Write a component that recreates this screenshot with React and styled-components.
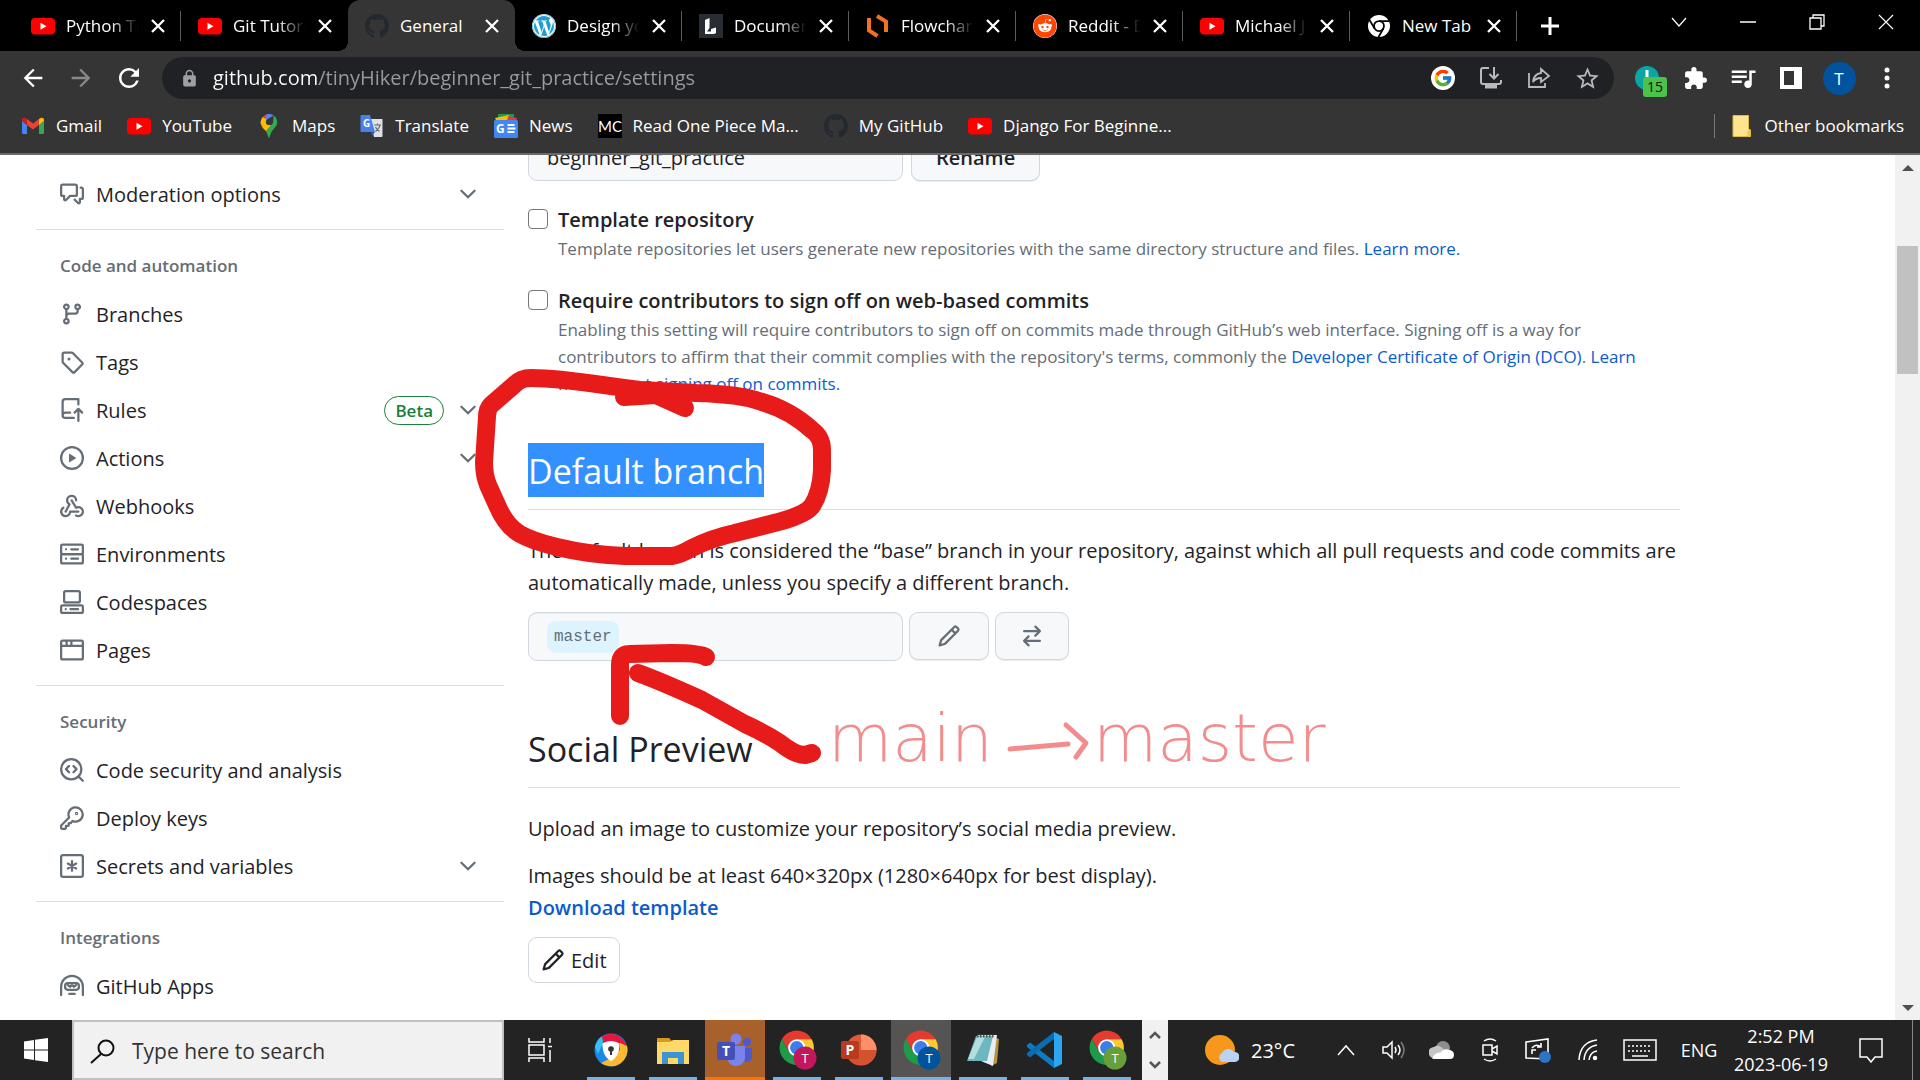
import React from "react";
import styled, { createGlobalStyle, css } from "styled-components";
import { FaWordpress, FaReddit } from "react-icons/fa";
import { FcGoogle } from "react-icons/fc";
import { MdExtension, MdQueueMusic, MdStarBorder, MdRefresh, MdArrowBack, MdArrowForward, MdLock } from "react-icons/md";

const ui = '"Open Sans", "Noto Sans", sans-serif';
const mono = '"Liberation Mono", monospace';
const c = {
  ink: "#1f2328",
  muted: "#656d76",
  link: "#0c5bce",
  line: "#d8dee4",
  field: "#f6f8fa",
  chrome: "#353535",
  pen: "#e81b1b",
};

const Global = createGlobalStyle`
  *, *::before, *::after { box-sizing: border-box; }
  body { margin: 0; font-family: ${ui}; color: ${c.ink}; background: #fff; }
  button, input { font: inherit; color: inherit; }
  button { background: none; border: 0; padding: 0; cursor: pointer; }
  h2, h3, p, ul { margin: 0; padding: 0; font-weight: 400; }
  ul { list-style: none; }
  a { text-decoration: none; color: inherit; }
  svg { display: block; flex: none; }
`;

const Screen = styled.div`
  height: 100vh;
  display: flex;
  flex-direction: column;
  overflow: hidden;
`;

/* ---------- tab strip ---------- */

const TabStrip = styled.header`
  flex: none;
  display: flex;
  height: 51px;
  padding-left: 14px;
  background: #000;
  color: #fff;
`;

const Tab = styled.div`
  flex: 0 1 167px;
  min-width: 0;
  display: flex;
  align-items: center;
  padding: 0 15px 0 17px;
  position: relative;
  ${(p) =>
    p.$divider &&
    css`
      &::after {
        content: "";
        position: absolute;
        right: 0;
        top: 11px;
        width: 1px;
        height: 30px;
        background: #5a5a5a;
      }
    `}
  ${(p) =>
    p.$active &&
    css`
      background: ${c.chrome};
      border-radius: 12px 12px 0 0;
      &::before {
        content: "";
        position: absolute;
        left: -10px;
        right: -10px;
        bottom: 0;
        height: 10px;
        background: radial-gradient(circle at 0 0, transparent 10px, ${c.chrome} 10px) left / 10px 10px no-repeat,
          radial-gradient(circle at 100% 0, transparent 10px, ${c.chrome} 10px) right / 10px 10px no-repeat;
      }
    `}
`;

const TabTitle = styled.button`
  flex: 1;
  min-width: 0;
  display: flex;
  align-items: center;
  gap: 11px;
  font-size: 17px;
  line-height: 24px;
  text-align: left;
  span {
    flex: 1;
    overflow: hidden;
    white-space: nowrap;
    mask-image: ${(p) => (p.$fade ? "linear-gradient(to right, #000 60%, transparent 98%)" : "none")};
  }
`;

const CloseTab = styled.button`
  flex: none;
  width: 16px;
  height: 24px;
  margin-left: 10px;
  display: grid;
  place-items: center;
`;

const NewTab = styled.button`
  width: 66px;
  display: grid;
  place-items: center;
`;

const WindowButtons = styled.div`
  margin-left: auto;
  display: flex;
  height: 44px;
`;

const WindowButton = styled.button`
  width: 69px;
  display: grid;
  place-items: center;
`;

/* ---------- toolbar ---------- */

const Toolbar = styled.div`
  flex: none;
  display: flex;
  align-items: center;
  height: 54px;
  background: ${c.chrome};
  color: #fff;
  padding: 0 9px;
`;

const NavButton = styled.button`
  width: 48px;
  height: 42px;
  display: grid;
  place-items: center;
  color: ${(p) => (p.$dim ? "#8a8a8a" : "#fff")};
`;

const OmniButton = styled(NavButton)`
  color: #b8b9bc;
`;

const Omnibox = styled.label`
  flex: 1;
  display: flex;
  align-items: center;
  height: 42px;
  margin: 0 9px;
  padding: 0 3px 0 18px;
  border-radius: 21px;
  background: #202124;
`;

const Address = styled.input`
  flex: 1;
  min-width: 0;
  margin-left: 14px;
  border: 0;
  outline: 0;
  padding: 0;
  font-size: 20px;
  line-height: 30px;
  color: transparent;
  background: linear-gradient(to right, #fff 106px, #9a9b9e 106px);
  background-clip: text;
`;

const Avatar = styled.span`
  width: 33px;
  height: 33px;
  border-radius: 50%;
  background: #00539c;
  display: grid;
  place-items: center;
  font-size: 17px;
`;

const Extension = styled(NavButton)`
  position: relative;
`;

const ExtensionBadge = styled.span`
  position: absolute;
  left: 20px;
  top: 20px;
  padding: 0 4px;
  border-radius: 3px;
  background: #4cc24a;
  color: #111;
  font-size: 14px;
  line-height: 20px;
`;

const Bookmarks = styled.nav`
  flex: none;
  display: flex;
  align-items: center;
  gap: 25px;
  height: 50px;
  padding: 0 16px 7px 21px;
  background: ${c.chrome};
  color: #fff;
  border-bottom: 2px solid #6a6a6a;
  font-size: 17px;
  line-height: 24px;
`;

const Bookmark = styled.a`
  display: flex;
  align-items: center;
  gap: 11px;
  white-space: nowrap;
`;

const OtherBookmarks = styled.button`
  margin-left: auto;
  display: flex;
  align-items: center;
  gap: 12px;
  padding-left: 17px;
  border-left: 1px solid #777;
`;

/* ---------- page ---------- */

const Viewport = styled.div`
  flex: 1;
  min-height: 0;
  display: flex;
  position: relative;
  overflow: hidden;
  background: #fff;
`;

const Page = styled.div`
  flex: 1;
  min-width: 0;
  display: flex;
  gap: 24px;
  padding: 0 215px 0 36px;
`;

const Sidebar = styled.nav`
  flex: none;
  width: 468px;
  padding-top: 15px;
`;

const Group = styled.section`
  & + & {
    margin-top: 11px;
    border-top: 1px solid ${c.line};
    padding-top: 12px;
  }
`;

const GroupTitle = styled.h3`
  padding-left: 24px;
  font-size: 17px;
  font-weight: 600;
  line-height: 48px;
  color: ${c.muted};
`;

const SideLink = styled.a`
  display: flex;
  align-items: center;
  gap: 12px;
  height: 48px;
  padding: 0 24px;
  font-size: 20px;
  line-height: 30px;
  svg {
    color: ${c.muted};
  }
  > span:first-of-type {
    margin-right: auto;
    padding-top: 2px;
  }
`;

const Beta = styled.span`
  height: 29px;
  padding: 0 10px;
  border: 1px solid #1a7f37;
  border-radius: 15px;
  color: #1a7f37;
  font-size: 17px;
  font-weight: 600;
  line-height: 27px;
`;

const Content = styled.main`
  flex: 1;
  min-width: 0;
  margin-top: -22px;
`;

const Row = styled.div`
  display: flex;
  align-items: flex-start;
  gap: ${(p) => p.$gap}px;
`;

const fieldBox = css`
  width: 375px;
  border: 1px solid #d0d7de;
  border-radius: 9px;
  background: ${c.field};
  box-shadow: inset 0 1px 0 #e9ecf0;
`;

const NameInput = styled.input`
  ${fieldBox}
  height: 48px;
  padding: 0 18px;
  font-size: 20px;
`;

const BranchBox = styled.div`
  ${fieldBox}
  height: 49px;
  display: flex;
  align-items: center;
  padding: 0 18px;
`;

const BranchName = styled.span`
  padding: 0 7px;
  border-radius: 9px;
  background: #ddf4ff;
  font-family: ${mono};
  font-size: 16px;
  line-height: 32px;
  color: ${c.muted};
`;

const Button = styled.button`
  display: flex;
  align-items: center;
  justify-content: center;
  gap: 6px;
  height: ${(p) => (p.$plain ? 46 : 48)}px;
  padding: 0 ${(p) => p.$pad || 24}px;
  border: 1px solid #d0d7de;
  border-radius: 9px;
  background: ${(p) => (p.$plain ? "#fff" : c.field)};
  box-shadow: ${(p) => (p.$plain ? "none" : "0 1px 0 #e8eaec")};
  color: ${(p) => (p.$muted ? c.muted : c.ink)};
  font-size: 20px;
  font-weight: ${(p) => (p.$bold ? 600 : 400)};
`;

const Option = styled.div`
  display: grid;
  grid-template-columns: 20px 1fr;
  column-gap: 10px;
  margin-top: 23px;
  input {
    width: 20px;
    height: 20px;
    margin: 5px 0 0;
    appearance: none;
    border: 1px solid #767676;
    border-radius: 4px;
    background: #fff;
  }
  label {
    font-size: 20px;
    font-weight: 600;
    line-height: 31px;
  }
  p {
    grid-column: 2;
    max-width: 1092px;
    font-size: 17px;
    line-height: 27px;
    color: ${c.muted};
  }
`;

const Link = styled.a`
  color: ${c.link};
  font-weight: ${(p) => (p.$bold ? 600 : 400)};
`;

const Title = styled.h2`
  margin-top: ${(p) => p.$top}px;
  padding-bottom: 12px;
  border-bottom: 1px solid ${c.line};
  font-size: 34px;
  line-height: 52px;
  span {
    display: inline-block;
    padding-top: 2px;
    background: ${(p) => (p.$selected ? "#3390ff" : "transparent")};
    color: ${(p) => (p.$selected ? "#fff" : "inherit")};
  }
`;

const Text = styled.p`
  margin: ${(p) => p.$top}px 0 ${(p) => p.$bottom || 0}px;
  font-size: 20px;
  line-height: 32px;
`;

const ScrollColumn = styled.div`
  flex: none;
  width: 25px;
  display: flex;
  flex-direction: column;
  align-items: center;
  background: #f1f1f1;
  button {
    width: 25px;
    height: 25px;
    display: grid;
    place-items: center;
  }
`;

const ScrollTrack = styled.div`
  flex: 1;
  padding-top: 66px;
  &::before {
    content: "";
    display: block;
    width: 21px;
    height: 128px;
    background: #c1c1c1;
  }
`;

const Ink = styled.svg`
  position: absolute;
  left: 0;
  top: 0;
  pointer-events: none;
`;

const Note = styled.span`
  position: absolute;
  left: ${(p) => p.$left}px;
  top: 534px;
  font-family: "DejaVu Sans Light", "DejaVu Sans", sans-serif;
  font-size: 66px;
  font-weight: 200;
  line-height: 100px;
  color: rgba(232, 27, 27, 0.5);
  pointer-events: none;
`;

/* ---------- taskbar ---------- */

const Taskbar = styled.footer`
  flex: none;
  display: flex;
  align-items: stretch;
  height: 60px;
  background: #232323;
  color: #fff;
`;

const StartButton = styled.button`
  width: 72px;
  display: grid;
  place-items: center;
`;

const Search = styled.label`
  width: 432px;
  display: flex;
  align-items: center;
  gap: 17px;
  padding: 2px 16px 0;
  border: 2px solid #c1c1c1;
  background: #f1f1f1;
  color: #111;
  input {
    flex: 1;
    min-width: 0;
    border: 0;
    padding: 0;
    outline: 0;
    background: none;
    font-size: 21px;
    line-height: 30px;
  }
  input::placeholder {
    color: #333;
    opacity: 1;
  }
`;

const Apps = styled.div`
  display: flex;
  gap: 2px;
  padding-left: 5px;
`;

const AppButton = styled.button`
  width: 60px;
  display: grid;
  place-items: center;
  background: ${(p) => p.$tone || "transparent"};
  position: relative;
  &::after {
    content: "";
    position: absolute;
    left: ${(p) => (p.$tone ? 0 : 6)}px;
    right: ${(p) => (p.$tone ? 0 : 6)}px;
    bottom: 0;
    height: 3px;
    background: ${(p) => p.$bar || "#76b3e4"};
  }
`;

const AppScroller = styled.div`
  width: 26px;
  margin-left: 5px;
  display: flex;
  flex-direction: column;
  background: #f0f0f0;
  color: #555;
  button {
    flex: 1;
    display: grid;
    place-items: center;
  }
`;

const Weather = styled.button`
  display: flex;
  align-items: center;
  gap: 12px;
  margin-left: 37px;
  font-size: 20px;
`;

const Tray = styled.div`
  margin-left: auto;
  display: flex;
`;

const TrayButton = styled.button`
  width: ${(p) => p.$w || 48}px;
  display: grid;
  place-items: center;
  align-content: center;
  font-size: 18px;
  line-height: 28px;
`;

const ShowDesktop = styled.button`
  width: 8px;
  border-left: 1px solid #888;
`;

/* ---------- icons ---------- */

const Oct = ({ d, s = 24, children, color }) => (
  <svg width={s} height={s} viewBox="0 0 16 16" fill="currentColor" style={color ? { color } : undefined} aria-hidden="true">
    {d && <path d={d} />}
    {children && (
      <g fill="none" stroke="currentColor" strokeWidth="1.5" strokeLinecap="round" strokeLinejoin="round">
        {children}
      </g>
    )}
  </svg>
);

const paths = {
  discussion:
    "M1.75 1h8.5c.966 0 1.75.784 1.75 1.75v5.5A1.75 1.75 0 0 1 10.25 10H7.061l-2.574 2.573A1.458 1.458 0 0 1 2 11.543V10h-.25A1.75 1.75 0 0 1 0 8.25v-5.5C0 1.784.784 1 1.75 1ZM1.5 2.75v5.5c0 .138.112.25.25.25h1a.75.75 0 0 1 .75.75v2.19l2.72-2.72a.749.749 0 0 1 .53-.22h3.5a.25.25 0 0 0 .25-.25v-5.5a.25.25 0 0 0-.25-.25h-8.5a.25.25 0 0 0-.25.25Zm13 2a.25.25 0 0 0-.25-.25h-.5a.75.75 0 0 1 0-1.5h.5c.966 0 1.75.784 1.75 1.75v5.5A1.75 1.75 0 0 1 14.25 12H14v1.543a1.458 1.458 0 0 1-2.487 1.03L9.22 12.28a.749.749 0 0 1 .326-1.275.749.749 0 0 1 .734.215l2.22 2.22v-2.19a.75.75 0 0 1 .75-.75h1a.25.25 0 0 0 .25-.25Z",
  branch:
    "M9.5 3.25a2.25 2.25 0 1 1 3 2.122V6A2.5 2.5 0 0 1 10 8.5H6a1 1 0 0 0-1 1v1.128a2.251 2.251 0 1 1-1.5 0V5.372a2.25 2.25 0 1 1 1.5 0v1.836A2.493 2.493 0 0 1 6 7h4a1 1 0 0 0 1-1v-.628A2.25 2.25 0 0 1 9.5 3.25Zm-6 0a.75.75 0 1 0 1.5 0 .75.75 0 0 0-1.5 0Zm8.25-.75a.75.75 0 1 0 0 1.5.75.75 0 0 0 0-1.5ZM4.25 12a.75.75 0 1 0 0 1.5.75.75 0 0 0 0-1.5Z",
  tag: "M1 7.775V2.75C1 1.784 1.784 1 2.75 1h5.025c.464 0 .91.184 1.238.513l6.25 6.25a1.75 1.75 0 0 1 0 2.474l-5.026 5.026a1.75 1.75 0 0 1-2.474 0l-6.25-6.25A1.752 1.752 0 0 1 1 7.775Zm1.5 0c0 .066.026.13.073.177l6.25 6.25a.25.25 0 0 0 .354 0l5.025-5.025a.25.25 0 0 0 0-.354l-6.25-6.25a.25.25 0 0 0-.177-.073H2.75a.25.25 0 0 0-.25.25ZM6 5a1 1 0 1 1 0 2 1 1 0 0 1 0-2Z",
  push: "M1 2.5A2.5 2.5 0 0 1 3.5 0h8.75a.75.75 0 0 1 .75.75v3.5a.75.75 0 0 1-1.5 0V1.5h-8a1 1 0 0 0-1 1v6.708A2.493 2.493 0 0 1 3.5 9h3.25a.75.75 0 0 1 0 1.5H3.5a1 1 0 0 0 0 2h5.75a.75.75 0 0 1 0 1.5H3.5A2.5 2.5 0 0 1 1 11.5Zm13.23 7.79h-.001l-1.224-1.224v6.184a.75.75 0 0 1-1.5 0V9.066L10.28 10.29a.75.75 0 0 1-1.06-1.061l2.505-2.504a.75.75 0 0 1 1.06 0L15.29 9.23a.751.751 0 0 1-.018 1.042.751.751 0 0 1-1.042.018Z",
  play: "M8 0a8 8 0 1 1 0 16A8 8 0 0 1 8 0ZM1.5 8a6.5 6.5 0 1 0 13 0 6.5 6.5 0 0 0-13 0Zm4.879-2.773 4.264 2.559a.25.25 0 0 1 0 .428l-4.264 2.559A.25.25 0 0 1 6 10.559V5.442a.25.25 0 0 1 .379-.215Z",
  webhook:
    "M5.5 4.25a2.25 2.25 0 0 1 4.5 0 .75.75 0 0 0 1.5 0 3.75 3.75 0 1 0-6.14 2.889l-2.272 4.258a.75.75 0 0 0 1.324.706L7 7.25a.75.75 0 0 0-.309-1.015A2.25 2.25 0 0 1 5.5 4.25ZM7.364 3.607a.75.75 0 0 1 1.03.257l2.608 4.349a3.75 3.75 0 1 1-.628 6.785.75.75 0 0 1 .752-1.299 2.25 2.25 0 1 0-.033-3.88.75.75 0 0 1-1.03-.256L7.107 4.636a.75.75 0 0 1 .257-1.03ZM2.9 8.776A.75.75 0 0 1 2.625 9.8 2.25 2.25 0 1 0 6 11.75a.75.75 0 0 1 .75-.751h5.5a.75.75 0 0 1 0 1.5H7.425a3.751 3.751 0 1 1-5.55-3.998.75.75 0 0 1 1.024.274Z",
  pencil:
    "M11.013 1.427a1.75 1.75 0 0 1 2.474 0l1.086 1.086a1.75 1.75 0 0 1 0 2.474l-8.61 8.61c-.21.21-.47.364-.756.445l-3.251.93a.75.75 0 0 1-.927-.928l.929-3.25c.081-.286.235-.547.445-.758l8.61-8.61Zm.176 4.823L9.75 4.81l-6.286 6.287a.253.253 0 0 0-.064.108l-.558 1.953 1.953-.558a.253.253 0 0 0 .108-.064Zm1.238-3.763a.25.25 0 0 0-.354 0L10.811 3.75l1.439 1.44 1.263-1.263a.25.25 0 0 0 0-.354Z",
  swap: "M5.22 14.78a.75.75 0 0 0 1.06-1.06L4.56 12h8.69a.75.75 0 0 0 0-1.5H4.56l1.72-1.72a.75.75 0 0 0-1.06-1.06l-3 3a.75.75 0 0 0 0 1.06l3 3Zm5.56-6.5a.75.75 0 1 1-1.06-1.06l1.72-1.72H2.75a.75.75 0 0 1 0-1.5h8.69L9.72 2.28a.75.75 0 0 1 1.06-1.06l3 3a.75.75 0 0 1 0 1.06l-3 3Z",
  github:
    "M8 0c4.42 0 8 3.58 8 8a8.013 8.013 0 0 1-5.45 7.59c-.4.08-.55-.17-.55-.38 0-.27.01-1.13.01-2.2 0-.75-.25-1.23-.54-1.48 1.78-.2 3.65-.88 3.65-3.95 0-.88-.31-1.59-.82-2.15.08-.2.36-1.02-.08-2.12 0 0-.67-.22-2.2.82-.64-.18-1.32-.27-2-.27-.68 0-1.36.09-2 .27-1.53-1.03-2.2-.82-2.2-.82-.44 1.1-.16 1.92-.08 2.12-.51.56-.82 1.28-.82 2.15 0 3.06 1.86 3.75 3.64 3.95-.23.2-.44.55-.51 1.07-.46.21-1.61.55-2.33-.66-.15-.24-.6-.83-1.23-.82-.67.01-.27.38.01.53.34.19.73.9.82 1.13.16.45.68 1.31 2.69.94 0 .67.01 1.3.01 1.49 0 .21-.15.45-.55.38A7.995 7.995 0 0 1 0 8c0-4.42 3.58-8 8-8Z",
};

const icons = {
  discussion: <Oct d={paths.discussion} />,
  branch: <Oct d={paths.branch} />,
  tag: <Oct d={paths.tag} />,
  push: <Oct d={paths.push} />,
  play: <Oct d={paths.play} />,
  webhook: <Oct d={paths.webhook} />,
  server: (
    <Oct>
      <rect x=".75" y="1.75" width="14.5" height="6.25" rx="1" />
      <rect x=".75" y="8" width="14.5" height="6.25" rx="1" />
      <path d="M4 4.9h.01M7.5 4.9h4.5M4 11.1h.01M7.5 11.1h4.5" />
    </Oct>
  ),
  codespaces: (
    <Oct>
      <rect x="2.75" y=".75" width="10.5" height="7.5" rx="1" />
      <rect x=".75" y="10.25" width="14.5" height="5" rx="1" />
      <path d="M3.8 12.75h.01M7 12.75h5" />
    </Oct>
  ),
  browser: (
    <Oct>
      <rect x=".75" y="1.75" width="14.5" height="12.5" rx="1" />
      <path d="M1 5.25h14M4.4 2v3M7.6 2v3" />
    </Oct>
  ),
  codescan: (
    <Oct>
      <circle cx="7.5" cy="7.5" r="6.75" />
      <path d="M12.4 12.4l2.8 2.8M6 5.3L4 7.4l2 2.1M9 5.3l2 2.1-2 2.1" />
    </Oct>
  ),
  key: (
    <Oct>
      <path d="M6.1 7.7L.75 13v1.5c0 .4.3.75.7.75h1.8c.4 0 .7-.3.7-.7v-1.3h1.3c.4 0 .6-.3.6-.6v-1.2h1.2l1.3-1.5a4.75 4.75 0 1 0-2.25-2.25Z" />
      <circle cx="11" cy="5" r=".4" />
    </Oct>
  ),
  asterisk: (
    <Oct>
      <rect x=".75" y=".75" width="14.5" height="14.5" rx="1.4" />
      <path d="M8 4.8v6.4M5.2 6.4l5.6 3.2M5.2 9.6l5.6-3.2" />
    </Oct>
  ),
  hubot: (
    <Oct>
      <path d="M.75 14V8.5a7.25 7.25 0 0 1 14.5 0V14M6.2 13.25h3.6" />
      <rect x="3.4" y="6" width="9.2" height="4.5" rx="1.8" />
      <path d="M5.3 7.4l1.3 1.1L8 7.4l1.4 1.1 1.3-1.1" />
    </Oct>
  ),
};

const ChevronDown = () => (
  <Oct>
    <path d="M3.6 5.8L8 10.2l4.400-4.400" />
  </Oct>
);

const YouTube = () => (
  <svg width="24" height="24" viewBox="0 0 24 24" aria-hidden="true">
    <rect y="4" width="24" height="16.500" rx="4" fill="#f00" />
    <path d="M9.500 8.800v7l6-3.500z" fill="#fff" />
  </svg>
);

const GitHubMark = () => <Oct d={paths.github} color="#24292f" />;

const Lucid = () => (
  <svg width="24" height="24" viewBox="0 0 24 24" aria-hidden="true">
    <rect width="24" height="24" fill="#282c33" />
    <path d="M6 6l4.500-2v10L8 17.500h4V15l5-1.500V19l-2 1H6z" fill="#fff" />
  </svg>
);

const FlowIcon = () => (
  <svg width="24" height="24" viewBox="0 0 24 24" fill="none" stroke="#f37021" strokeWidth="4" aria-hidden="true">
    <path d="M3 4v12.500l8.500 5.500" />
    <path d="M11 2l9 5.500V18" />
  </svg>
);

const ChromeMono = () => (
  <svg width="24" height="24" viewBox="0 0 48 48" aria-hidden="true">
    <circle cx="24" cy="24" r="22" fill="#fff" />
    <g fill="none" stroke="#000" strokeWidth="3.500">
      <circle cx="24" cy="24" r="10" />
      <path d="M24 14h20M15.300 29L5 12M32.700 29L23 46" />
    </g>
    <circle cx="24" cy="24" r="6.500" fill="#fff" />
  </svg>
);

const Chrome = ({ badge }) => (
  <svg width="40" height="48" viewBox="0 0 40 48" aria-hidden="true">
    <g transform="translate(1 3) scale(.78)">
      <path d="M4.950 13A22 22 0 0 1 43.050 13H24V24L14.500 29.500Z" fill="#e33b2e" />
      <path d="M43.050 13A22 22 0 0 1 24 46L33.500 29.500 24 24V13Z" fill="#fcc934" />
      <path d="M24 46A22 22 0 0 1 4.950 13L14.500 29.500 24 24 33.500 29.500Z" fill="#1e9b4a" />
      <circle cx="24" cy="24" r="11" fill="#fff" />
      <circle cx="24" cy="24" r="8.500" fill="#3b7ded" />
    </g>
    <circle cx="28" cy="32" r="11.500" fill={badge} />
    <text x="28" y="37" textAnchor="middle" fontSize="13" fill="#fff" fontFamily="Open Sans">T</text>
  </svg>
);

const Gmail = () => (
  <svg width="24" height="24" viewBox="0 0 24 24" aria-hidden="true">
    <path d="M1 7v11.500a1.500 1.500 0 0 0 1.500 1.500H6V11z" fill="#4285f4" />
    <path d="M18 20h3.500a1.500 1.500 0 0 0 1.500-1.500V7l-5 4z" fill="#34a853" />
    <path d="M18 5v6l5-4V6c0-2-2.200-2.900-3.700-1.800z" fill="#fbbc04" />
    <path d="M6 11V5l6 4.500L18 5v6l-6 4.500z" fill="#ea4335" />
    <path d="M1 6v1l5 4V5l-1.300-.8C3.200 3.100 1 4 1 6z" fill="#c5221f" />
  </svg>
);

const Maps = () => (
  <svg width="24" height="24" viewBox="0 0 24 24" aria-hidden="true">
    <path d="M12 0a8.300 8.300 0 0 0-6.300 2.900L10 7z" fill="#ea4335" />
    <path d="M12 0c-1 0-2 .2-2.600.4L9 6l6-3.500L16.500 1.300A8.300 8.300 0 0 0 12 0z" fill="#4a86f5" />
    <path d="M5.700 2.900A8.300 8.300 0 0 0 4.900 12.500L11 6.500z" fill="#fbbc04" />
    <path d="M16.500 1.300A8.300 8.300 0 0 1 19.500 11.500L15 17C13.500 19.500 13 23 12 24 11 23 10.500 19.500 9 17.200L16 9z" fill="#34a853" />
    <path d="M4.900 12.500C6 14.800 7.600 15.500 9 17.200l5-6L9 7z" fill="#fbbc04" />
    <circle cx="12" cy="8" r="3.100" fill="#35363a" />
  </svg>
);

const Translate = () => (
  <svg width="24" height="24" viewBox="0 0 24 24" aria-hidden="true">
    <path d="M9 5h13.500v17a1 1 0 0 1-1 1H14z" fill="#dfe1e5" />
    <path d="M14 11h7M17.500 9.500v1.500M20 11c-.5 3-2.500 5-4.500 6.500M15.500 13c1 2 2.500 3.500 4 4.500" stroke="#5f6e78" strokeWidth="1.200" fill="none" />
    <path d="M1.500 1H10l5 17H1.500a1 1 0 0 1-1-1V2a1 1 0 0 1 1-1z" fill="#4a80ec" />
    <path d="M11 18h4l-3 4z" fill="#3257b5" />
    <text x="3" y="13" fontSize="10" fontWeight="700" fill="#fff" fontFamily="Open Sans">G</text>
  </svg>
);

const News = () => (
  <svg width="24" height="24" viewBox="0 0 24 24" aria-hidden="true">
    <path d="M4 0h16v6H4z" fill="#1e9b4a" />
    <path d="M1 4l14-3 1 5H2z" fill="#fbbc04" />
    <path d="M14 2l9 2-1 4h-9z" fill="#e33b2e" />
    <rect y="6" width="24" height="18" rx="1.500" fill="#4285f4" />
    <text x="2" y="19" fontSize="12" fontWeight="700" fill="#fff" fontFamily="Open Sans">G</text>
    <path d="M13.500 11h7M13.500 14.500h8M13.500 18h7" stroke="#fff" strokeWidth="2" />
  </svg>
);

const MangaIcon = () => (
  <svg width="24" height="24" viewBox="0 0 24 24" aria-hidden="true">
    <rect width="24" height="24" fill="#000" />
    <text x="12" y="18" textAnchor="middle" fontSize="15" fill="#fff" fontFamily="Lato">MC</text>
  </svg>
);

const Folder = () => (
  <svg width="20" height="24" viewBox="0 0 20 24" aria-hidden="true">
    <path d="M1 1.500h15.500V15l2 1v6.500H1z" fill="#ffe38f" stroke="#e2b93c" />
    <path d="M15.500 22.500V17l3-1.500v7z" fill="#f0c54c" />
  </svg>
);

const CloseX = () => (
  <svg width="14" height="14" viewBox="0 0 14 14" stroke="#fff" strokeWidth="2.300" aria-hidden="true">
    <path d="M1 1l12 12M13 1L1 13" />
  </svg>
);

const Line = ({ w = 28, h = w, sw = 1.5, children }) => (
  <svg width={w} height={h} viewBox={`0 0 ${w} ${h}`} fill="none" stroke="currentColor" strokeWidth={sw} aria-hidden="true">
    {children}
  </svg>
);

const Triangle = ({ down }) => (
  <svg width="12" height="8" viewBox="0 0 12 8" fill="#505050" aria-hidden="true">
    <path d={down ? "M0 1h12L6 7z" : "M0 7h12L6 1z"} />
  </svg>
);

/* ---------- data ---------- */

const round = { background: "#fff", borderRadius: 12 };

const tabs = [
  { label: "Python Tu", i: <YouTube />, fade: true, div: true },
  { label: "Git Tutori", i: <YouTube />, fade: true },
  { label: "General", i: <GitHubMark />, active: true },
  { label: "Design yo", i: <FaWordpress size={24} color="#1f9fd4" style={round} />, fade: true, div: true },
  { label: "Documen", i: <Lucid />, fade: true, div: true },
  { label: "Flowchar", i: <FlowIcon />, fade: true, div: true },
  { label: "Reddit - D", i: <FaReddit size={24} color="#ff4500" style={round} />, fade: true, div: true },
  { label: "Michael J", i: <YouTube />, fade: true, div: true },
  { label: "New Tab", i: <ChromeMono />, div: true },
];

const bookmarks = [
  ["Gmail", <Gmail />],
  ["YouTube", <YouTube />],
  ["Maps", <Maps />],
  ["Translate", <Translate />],
  ["News", <News />],
  ["Read One Piece Ma...", <MangaIcon />],
  ["My GitHub", <GitHubMark />],
  ["Django For Beginne...", <YouTube />],
];

const groups = [
  { items: [["Moderation options", "discussion", { more: true }]] },
  {
    title: "Code and automation",
    items: [
      ["Branches", "branch"],
      ["Tags", "tag"],
      ["Rules", "push", { more: true, beta: true }],
      ["Actions", "play", { more: true }],
      ["Webhooks", "webhook"],
      ["Environments", "server"],
      ["Codespaces", "codespaces"],
      ["Pages", "browser"],
    ],
  },
  {
    title: "Security",
    items: [
      ["Code security and analysis", "codescan"],
      ["Deploy keys", "key"],
      ["Secrets and variables", "asterisk", { more: true }],
    ],
  },
  { title: "Integrations", items: [["GitHub Apps", "hubot"]] },
];

const apps = [
  {
    name: "Secure Browser",
    icon: (
      <svg width="34" height="34" viewBox="0 0 34 34" aria-hidden="true">
        <circle cx="17" cy="17" r="16.500" fill="#1b87e8" />
        <path d="M8 3.500A16.500 16.500 0 0 1 33 14L26 19 9 10z" fill="#e5173f" />
        <path d="M33 13A16.500 16.500 0 0 1 7 30l10-5 9-8V10z" fill="#fbb92e" />
        <path d="M8 3.500A16.500 16.500 0 0 0 1 14l3 7 5-11z" fill="#38c1f0" />
        <path d="M17 8c3 0 6 1 8.500 2.500C26 19 22 26 17 28 12 26 8 19 8.500 10.500 11 9 14 8 17 8z" fill="#fff" />
        <circle cx="17" cy="16" r="2.800" fill="#333" />
        <path d="M16 17h2v5h-2z" fill="#333" />
      </svg>
    ),
  },
  {
    name: "File Explorer",
    icon: (
      <svg width="34" height="34" viewBox="0 0 34 34" aria-hidden="true">
        <path d="M1 5h12l3 3v4H1z" fill="#d99a1c" />
        <path d="M1 9h13l3-2h16v24H1z" fill="#ffd868" />
        <path d="M6 31V19h22v12h-6v-6H12v6z" fill="#3a94d6" />
      </svg>
    ),
  },
  {
    name: "Teams",
    tone: "#a8612a",
    bar: "#ff7200",
    icon: (
      <svg width="36" height="36" viewBox="0 0 36 36" aria-hidden="true">
        <circle cx="30" cy="10" r="4" fill="#5059c9" />
        <path d="M26 16h9v9a5 5 0 0 1-9 3z" fill="#5059c9" />
        <circle cx="19" cy="7" r="5.500" fill="#7b83eb" />
        <path d="M11 14h17v12a9 9 0 0 1-17 3z" fill="#7b83eb" />
        <rect y="10" width="18" height="18" rx="2" fill="#464eb8" />
        <text x="9" y="24" textAnchor="middle" fontSize="14" fontWeight="700" fill="#fff" fontFamily="Open Sans">T</text>
      </svg>
    ),
  },
  { name: "Chrome", icon: <Chrome badge="#c2185b" /> },
  {
    name: "PowerPoint",
    icon: (
      <svg width="36" height="36" viewBox="0 0 36 36" aria-hidden="true">
        <circle cx="20" cy="18" r="15.500" fill="#e0573a" />
        <path d="M20 2.500A15.500 15.500 0 0 1 35.500 18H20z" fill="#ff8f6b" />
        <path d="M20 18h15.500A15.500 15.500 0 0 1 6 24z" fill="#d35230" />
        <rect y="9" width="18" height="18" rx="2" fill="#b83b1d" />
        <text x="9" y="23" textAnchor="middle" fontSize="14" fontWeight="700" fill="#fff" fontFamily="Open Sans">P</text>
      </svg>
    ),
  },
  { name: "Chrome", tone: "#555453", icon: <Chrome badge="#00539c" /> },
  {
    name: "Notepad",
    icon: (
      <svg width="36" height="36" viewBox="0 0 36 36" aria-hidden="true">
        <path d="M31 6l3 1-2 24-6 3z" fill="#b89243" />
        <path d="M12 3h20l-4 31-12-5z" fill="#e9eef0" />
        <path d="M11 4h17l-6 25H2z" fill="#6fb7c0" />
        <path d="M12 5h8L9 27H3z" fill="#b4dde0" />
        <path d="M12 4h18" stroke="#555" strokeWidth="3" strokeDasharray="1.500 1.500" />
      </svg>
    ),
  },
  {
    name: "Visual Studio Code",
    icon: (
      <svg width="38" height="38" viewBox="0 0 38 38" aria-hidden="true">
        <path d="M1 14l3-2.500L28 30v7L1 16z" fill="#0b7cc4" />
        <path d="M1 24l3 2.500L28 8V1L1 22z" fill="#0b6cb0" />
        <path d="M28 1l8 4v28l-8 4z" fill="#2aa6f2" />
      </svg>
    ),
  },
  { name: "Chrome", icon: <Chrome badge="#689f38" /> },
];

export default function App() {
  return (
    <Screen>
      <Global />
      <TabStrip>
        {tabs.map((t) => (
          <Tab key={t.label} $active={t.active} $divider={t.div}>
            <TabTitle $fade={t.fade}>
              {t.i}
              <span>{t.label}</span>
            </TabTitle>
            <CloseTab aria-label={`Close ${t.label}`}>
              <CloseX />
            </CloseTab>
          </Tab>
        ))}
        <NewTab aria-label="New tab">
          <Line w={18} sw={3}><path d="M9 0v18M0 9h18" /></Line>
        </NewTab>
        <WindowButtons>
          <WindowButton aria-label="Search tabs"><Line w={16} h={10} sw={1.2}><path d="M1 1l7 8 7-8" /></Line></WindowButton>
          <WindowButton aria-label="Minimize"><Line w={16} h={2}><path d="M0 1h16" /></Line></WindowButton>
          <WindowButton aria-label="Restore"><Line w={16} sw={1.3}><path d="M1 4h11v11H1zM4 4V1h11v11h-3" /></Line></WindowButton>
          <WindowButton aria-label="Close window"><Line w={16} sw={1.2}><path d="M1 1l14 14M15 1L1 15" /></Line></WindowButton>
        </WindowButtons>
      </TabStrip>

      <Toolbar>
        <NavButton aria-label="Back"><MdArrowBack size={28} /></NavButton>
        <NavButton aria-label="Forward" $dim><MdArrowForward size={28} /></NavButton>
        <NavButton aria-label="Reload"><MdRefresh size={30} /></NavButton>
        <Omnibox>
          <MdLock size={19} color="#9aa0a6" />
          <Address aria-label="Address" defaultValue="github.com/tinyHiker/beginner_git_practice/settings" />
          <OmniButton aria-label="Google">
            <FcGoogle size={24} style={{ ...round, padding: 2 }} />
          </OmniButton>
          <OmniButton aria-label="Install">
            <Line w={24} sw={2}>
              <path d="M10 2H4a2 2 0 0 0-2 2v12a2 2 0 0 0 2 2h16a2 2 0 0 0 2-2v-2M15 1v11M10.500 8l4.500 4.500L19.500 8" />
              <path d="M6 20.500h12" strokeWidth="4" />
            </Line>
          </OmniButton>
          <OmniButton aria-label="Share">
            <Line w={24} sw={1.8}>
              <path d="M2 7v14h16v-4M14 7V3l8 7-8 6v-4c-4 0-6.500 1.500-8 4 .5-5 3.500-8.500 8-9z" />
            </Line>
          </OmniButton>
          <OmniButton aria-label="Bookmark this page"><MdStarBorder size={27} /></OmniButton>
        </Omnibox>
        <Extension aria-label="Extension">
          <svg width="24" height="24" viewBox="0 0 24 24" aria-hidden="true">
            <circle cx="12" cy="12" r="12" fill="#0aa6a6" />
            <path d="M10.500 4h3v14h-3z" fill="#fff" />
          </svg>
          <ExtensionBadge>15</ExtensionBadge>
        </Extension>
        <NavButton aria-label="Extensions"><MdExtension size={25} /></NavButton>
        <NavButton aria-label="Media"><MdQueueMusic size={30} /></NavButton>
        <NavButton aria-label="Side panel">
          <Line w={22} sw={4}><path d="M2 2h18v18H2zM16 2v18" /></Line>
        </NavButton>
        <NavButton aria-label="Profile"><Avatar>T</Avatar></NavButton>
        <NavButton aria-label="Menu">
          <svg width="6" height="22" viewBox="0 0 6 22" fill="#fff" aria-hidden="true">
            <circle cx="3" cy="3" r="2.500" /><circle cx="3" cy="11" r="2.500" /><circle cx="3" cy="19" r="2.500" />
          </svg>
        </NavButton>
      </Toolbar>

      <Bookmarks aria-label="Bookmarks">
        {bookmarks.map(([name, icon]) => (
          <Bookmark href="#" key={name}>{icon}{name}</Bookmark>
        ))}
        <OtherBookmarks><Folder />Other bookmarks</OtherBookmarks>
      </Bookmarks>

      <Viewport>
        <Page>
          <Sidebar aria-label="Settings">
            {groups.map((g, n) => (
              <Group key={n}>
                {g.title && <GroupTitle>{g.title}</GroupTitle>}
                <ul>
                  {g.items.map(([name, icon, o = {}]) => (
                    <li key={name}>
                      <SideLink href="#">
                        {icons[icon]}
                        <span>{name}</span>
                        {o.beta && <Beta>Beta</Beta>}
                        {o.more && <ChevronDown />}
                      </SideLink>
                    </li>
                  ))}
                </ul>
              </Group>
            ))}
          </Sidebar>

          <Content>
            <Row $gap={8}>
              <NameInput aria-label="Repository name" defaultValue="beginner_git_practice" />
              <Button $bold>Rename</Button>
            </Row>
            <Option>
              <input type="checkbox" id="template" />
              <label htmlFor="template">Template repository</label>
              <p>
                Template repositories let users generate new repositories with the same directory structure and files.{" "}
                <Link href="#">Learn more.</Link>
              </p>
            </Option>
            <Option>
              <input type="checkbox" id="signoff" />
              <label htmlFor="signoff">Require contributors to sign off on web-based commits</label>
              <p>
                Enabling this setting will require contributors to sign off on commits made through GitHub’s web interface. Signing off is a way for
                contributors to affirm that their commit complies with the repository's terms, commonly the{" "}
                <Link href="#">Developer Certificate of Origin (DCO)</Link>. <Link href="#">Learn more about signing off on commits.</Link>
              </p>
            </Option>

            <Title $top={46} $selected><span>Default branch</span></Title>
            <Text $top={25} $bottom={13}>
              The default branch is considered the “base” branch in your repository, against which all pull requests and code commits are
              automatically made, unless you specify a different branch.
            </Text>
            <Row $gap={6}>
              <BranchBox><BranchName>master</BranchName></BranchBox>
              <Button aria-label="Rename branch" $muted $pad={27}><Oct d={paths.pencil} /></Button>
              <Button aria-label="Switch default branch" $muted><Oct d={paths.swap} /></Button>
            </Row>

            <Title $top={60}><span>Social Preview</span></Title>
            <Text $top={25}>Upload an image to customize your repository’s social media preview.</Text>
            <Text $top={15} $bottom={13}>
              Images should be at least 640×320px (1280×640px for best display).
              <br />
              <Link href="#" $bold>Download template</Link>
            </Text>
            <Button $plain $pad={12}><Oct d={paths.pencil} />Edit</Button>
          </Content>
        </Page>

        <ScrollColumn>
          <button aria-label="Scroll up"><Triangle /></button>
          <ScrollTrack />
          <button aria-label="Scroll down"><Triangle down /></button>
        </ScrollColumn>

        <Ink width="1400" height="640" viewBox="0 155 1400 640" fill="none" stroke={c.pen} strokeWidth="18" strokeLinecap="round" strokeLinejoin="round" aria-hidden="true">
          <path d="M640 390C605 386 565 378 531 378C523 378 519 380 514 385L491 405Q487 409 487 417L484 462Q484 475 488 485L497 505Q506 526 520 534Q532 541 557 547Q590 555 625 556L672 556Q680 555 692 548Q712 538 735 533L782 521Q806 514 812 506Q821 492 822 470L822 450Q822 437 812 430Q790 410 762 402Q740 394 696 393L640 390" />
          <path d="M624 397L656 395 685 408" />
          <path d="M620 716V665Q620 654 629 654L672 653Q700 653 706 657" />
          <path d="M638 673Q660 681 702 700L745 724Q765 733 780 743Q795 755 805 755L812 753" />
          <g strokeWidth="5" strokeOpacity=".5">
            <path d="M1010 749L1068 744" />
            <path d="M1066 725L1086 743 1076 757" />
          </g>
        </Ink>
        <Note $left={828}>main</Note>
        <Note $left={1093}>master</Note>
      </Viewport>

      <Taskbar>
        <StartButton aria-label="Start">
          <svg width="24" height="24" viewBox="0 0 24 24" fill="#fff" aria-hidden="true">
            <path d="M0 3.400l10-1.400v9.500H0zM11 1.800L24 0v11.500H11zM0 12.500h10V22L0 20.600zM11 12.500h13V24l-13-1.800z" />
          </svg>
        </StartButton>
        <Search>
          <Line w={25} sw={2}><circle cx="16" cy="9" r="7.500" /><path d="M11 15L1 24" /></Line>
          <input type="search" aria-label="Search" placeholder="Type here to search" />
        </Search>
        <StartButton aria-label="Task view">
          <Line w={24}><path d="M1 0v4h15V0M1 7h15v10H1zM1 24v-4h15v4M22 0v5M22 12v12M20 8.500h4" /></Line>
        </StartButton>
        <Apps>
          {apps.map((a, n) => (
            <AppButton key={n} aria-label={a.name} $tone={a.tone} $bar={a.bar}>{a.icon}</AppButton>
          ))}
        </Apps>
        <AppScroller>
          <button aria-label="Previous"><Line w={12} h={8} sw={2.5}><path d="M1 7l5-5 5 5" /></Line></button>
          <button aria-label="Next"><Line w={12} h={8} sw={2.5}><path d="M1 1l5 5 5-5" /></Line></button>
        </AppScroller>
        <Weather>
          <svg width="34" height="32" viewBox="0 0 34 32" aria-hidden="true">
            <circle cx="15" cy="16" r="15" fill="#f7981d" />
            <path d="M17 28a5 5 0 0 1 0-9 7 7 0 0 1 12-1 5 5 0 0 1 1 10z" fill="#b9d3f5" />
          </svg>
          23°C
        </Weather>
        <Tray>
          <TrayButton aria-label="Hidden icons"><Line w={18} h={12}><path d="M1 11l8-9 8 9" /></Line></TrayButton>
          <TrayButton aria-label="Volume"><Line w={24} h={20}><path d="M1 7v6h4l5 5V2L5 7zM13 7q2 3 0 6M16 5q4 5 0 10" /><path d="M19 2q6 8 0 16" opacity=".4" /></Line></TrayButton>
          <TrayButton aria-label="OneDrive">
            <svg width="26" height="20" viewBox="0 0 26 20" aria-hidden="true">
              <circle cx="14" cy="8" r="7" fill="#8d8d8d" />
              <path d="M5 18a5.500 5.500 0 0 1 0-11q5-4 11 4z" fill="#c5c5c5" />
              <path d="M3 18.500q3-7 9-6 2-4 7-3 6 1 6 5 0 4.500-4 4.500H5z" fill="#fff" />
            </svg>
          </TrayButton>
          <TrayButton aria-label="Meet now"><Line w={20} h={24}><path d="M4 3q6-4 12 0M4 21q6 4 12 0M3 7h9v10H3zM12 11l5-3v8l-5-3" /></Line></TrayButton>
          <TrayButton aria-label="Updates">
            <Line w={26} sw={1.6}>
              <path d="M1 5l22-3v20l-22-1zM7 11q4-5 9-1M16 6v4h-4M7 17v-4h4" />
              <circle cx="20" cy="20" r="6" fill="#2b74c8" stroke="none" />
            </Line>
          </TrayButton>
          <TrayButton aria-label="Network" $w={52}><Line w={22} h={24}><path d="M2 22Q3 4 20 2M7 22Q8 9 20 7M12 22q1-8 8-9" /><circle cx="18" cy="20" r="1.500" fill="#fff" /></Line></TrayButton>
          <TrayButton aria-label="Keyboard" $w={52}><Line w={34} h={22}><path d="M1 1h32v20H1z" /><path d="M5 7h24M5 12h24" strokeDasharray="2 2" /><path d="M9 17h16" /></Line></TrayButton>
          <TrayButton $w={66}>ENG</TrayButton>
          <TrayButton $w={98}><span>2:52 PM</span><span>2023-06-19</span></TrayButton>
          <TrayButton $w={82} aria-label="Notifications"><Line w={24} h={25}><path d="M1 1h22v18h-7l-4 5-4-5H1z" /></Line></TrayButton>
          <ShowDesktop aria-label="Show desktop" />
        </Tray>
      </Taskbar>
    </Screen>
  );
}
